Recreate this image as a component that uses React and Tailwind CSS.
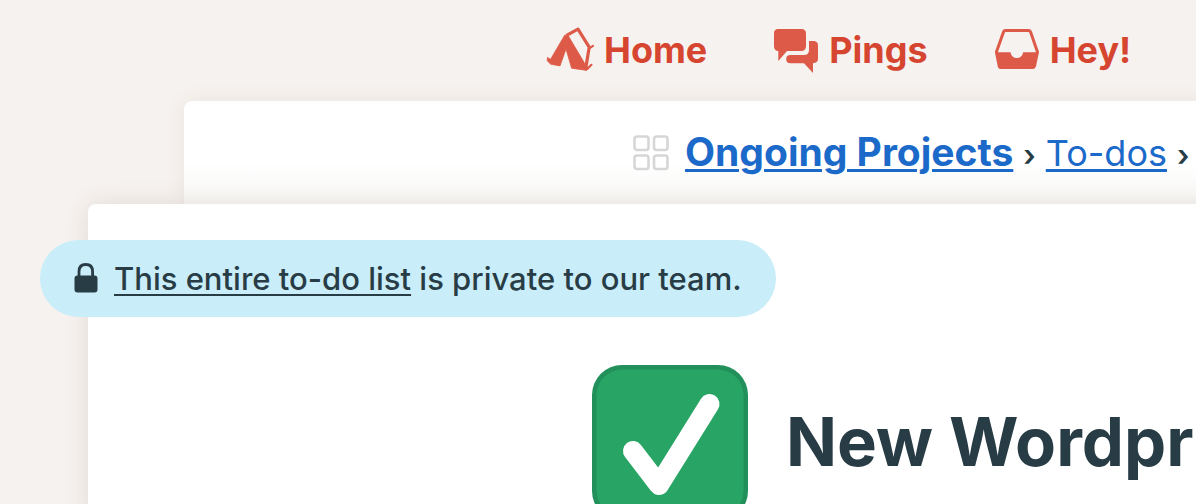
function TentIcon() {
  return (
    <svg viewBox="0 0 48 48" className="h-12 w-12 shrink-0" aria-hidden="true">
      <path
        d="M20.5 10.4 L32 4.2 L43.2 22.2 L39.8 43"
        fill="none"
        stroke="#dd5a48"
        strokeWidth="3.2"
        strokeLinejoin="round"
      />
      <path
        d="M18.8 10 L22.4 11 L39 39 L42 43 L40.8 45.4 L25.6 43.2 L20 24 L14 40.9 L4.8 39.2 L1.2 35.8 L1.4 32.4 L4.6 34.2 Z"
        fill="#dd5a48"
        stroke="#dd5a48"
        strokeWidth="0.8"
        strokeLinejoin="round"
      />
      <path
        d="M44 22.8 L47 20.8 M41.6 43.6 L45.4 39.8"
        stroke="#dd5a48"
        strokeWidth="2.2"
        strokeLinecap="round"
      />
    </svg>
  );
}

function PingsIcon() {
  return (
    <svg viewBox="0 0 46 48" className="h-12 w-[46px] shrink-0" aria-hidden="true">
      <path
        d="M5 4 H28.5 Q33 4 33 8.5 V21 Q33 26 28 26 H14 L5.3 36 V26 Q1 26 1 21 V8.5 Q1 4 5 4 Z"
        fill="#dd5a48"
      />
      <path
        d="M36 16 H40.5 Q45 16 45 20.5 V34 Q45 38 40 38.2 V48 L31 38.2 H17.5 Q13.2 38 13.2 34.2 Q13.2 30 17.5 30 H31 Q36 30 36 25 Z"
        fill="#dd5a48"
      />
    </svg>
  );
}

function InboxIcon() {
  return (
    <svg viewBox="0 0 46 48" className="h-12 w-[46px] shrink-0" aria-hidden="true">
      <path
        d="M11.5 5.6 H34.5 Q36 5.6 36.6 7 L43.5 27 L40.5 41 Q40 42.6 38.5 42.6 H7 Q5.5 42.6 5.2 41 L2.4 27 L9.5 7 Q10 5.6 11.5 5.6 Z"
        fill="none"
        stroke="#dd5a48"
        strokeWidth="3"
      />
      <path
        d="M2 27.2 H16.5 Q17.6 33 22.8 33 Q28 33 29.2 27.2 H44 L41 41 Q40.5 43.6 38 43.6 H7.5 Q5 43.6 4.6 41 Z"
        fill="#dd5a48"
      />
    </svg>
  );
}

function LockIcon() {
  return (
    <svg viewBox="0 0 24 32" className="h-8 w-6 shrink-0" aria-hidden="true">
      <path
        d="M5 14 V8.5 Q5 1.5 11.8 1.5 Q18.6 1.5 18.6 8.5 V14"
        fill="none"
        stroke="#283c46"
        strokeWidth="2.8"
      />
      <rect x="0.5" y="12.5" width="23" height="17" rx="3" fill="#283c46" />
    </svg>
  );
}

function GridIcon() {
  return (
    <svg viewBox="0 0 36 36" className="h-9 w-9" fill="none" stroke="#d6d6d6" strokeWidth="2.6" aria-hidden="true">
      <rect x="1.5" y="1.5" width="14" height="13.5" rx="2.5" />
      <rect x="21" y="1.5" width="13.5" height="13.5" rx="2.5" />
      <rect x="1.5" y="20.5" width="14" height="13.5" rx="2.5" />
      <rect x="21" y="20.5" width="13.5" height="13.5" rx="2.5" />
    </svg>
  );
}

function CheckIcon() {
  return (
    <svg viewBox="0 0 156 156" className="h-[156px] w-[156px] shrink-0" role="img" aria-label="Done">
      <rect width="156" height="156" rx="30" fill="#22905a" />
      <rect x="4.5" y="4.5" width="147" height="147" rx="26" fill="#28a564" />
      <path
        d="M41 86 L67 120 L117.5 39"
        fill="none"
        stroke="#fff"
        strokeWidth="20"
        strokeLinecap="round"
        strokeLinejoin="round"
      />
    </svg>
  );
}

const links = [
  { label: "Home", Icon: TentIcon },
  { label: "Pings", Icon: PingsIcon },
  { label: "Hey!", Icon: InboxIcon },
];

export default function App() {
  return (
    <div className="min-h-screen overflow-hidden bg-[#f6f2ef] font-['Inter',sans-serif] text-[#283c46]">
      <nav className="flex h-[101px] items-start gap-[66px] pt-6 pl-[546px]">
        {links.map(({ label, Icon }) => (
          <a
            key={label}
            href="#"
            className="flex shrink-0 items-center gap-2.5 text-4xl leading-[48px] font-bold text-[#d64530]"
          >
            <Icon />
            <span className="pt-0.5">{label}</span>
          </a>
        ))}
      </nav>

      <header className="-mr-10 ml-[184px] flex h-[103px] items-center rounded-tl-lg bg-white bg-linear-to-b from-white from-60% to-[#f8f7f5] pl-[449px] whitespace-nowrap shadow-[0_0_20px_rgba(90,60,40,0.08)]">
        <button type="button" aria-label="Project menu" className="mr-4 shrink-0">
          <GridIcon />
        </button>
        <div className="flex items-baseline gap-2.5 text-4xl leading-[48px]">
          <a href="#" className="text-[39px] font-bold text-[#1b6ac9] underline decoration-[3px] underline-offset-3">
            Ongoing Projects
          </a>
          <span className="text-3xl font-semibold">›</span>
          <a href="#" className="text-[#1b6ac9] underline decoration-[3px] underline-offset-3">
            To-dos
          </a>
          <span className="text-3xl font-semibold">›</span>
        </div>
      </header>

      <main className="relative -mr-10 ml-[88px] rounded-tl-lg bg-white pt-9 shadow-[0_0_24px_rgba(90,60,40,0.12)]">
        <p className="-ml-12 flex h-[77px] w-fit items-center gap-4 rounded-full bg-[#c9edf9] pr-[34px] pl-[34px] text-[31px] font-[450] whitespace-nowrap">
          <LockIcon />
          <span className="pt-0.5">
            <a href="#" className="underline decoration-2 underline-offset-4">
              This entire to-do list
            </a>{" "}
            is private to our team.
          </span>
        </p>
        <div className="mt-12 -mb-6 flex items-center gap-[38px] pl-[504px]">
          <CheckIcon />
          <h1 className="pb-1 text-[67px] leading-none font-bold whitespace-nowrap">New Wordpr</h1>
        </div>
      </main>
    </div>
  );
}
